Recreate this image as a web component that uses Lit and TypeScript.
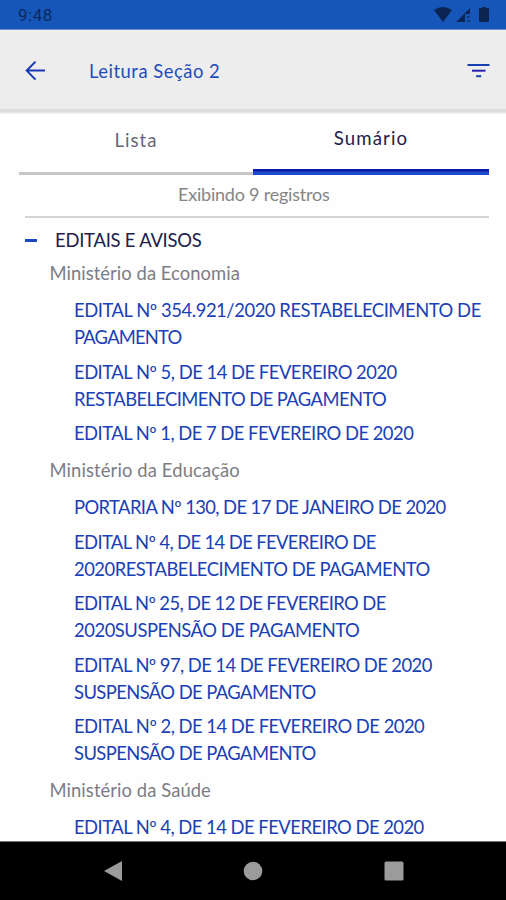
import { LitElement, html, css } from "lit";
import { customElement, property } from "lit/decorators.js";

type Line = [text: string, width: number];

const GROUPS: { name: Line; items: Line[][] }[] = [
  {
    name: ["Ministério da Economia", 188.5],
    items: [
      [["EDITAL Nº 354.921/2020 RESTABELECIMENTO DE", 405.5], ["PAGAMENTO", 106.5]],
      [["EDITAL Nº 5, DE 14 DE FEVEREIRO 2020", 321.5], ["RESTABELECIMENTO DE PAGAMENTO", 311]],
      [["EDITAL Nº 1, DE 7 DE FEVEREIRO DE 2020", 338]],
    ],
  },
  {
    name: ["Ministério da Educação", 188.5],
    items: [
      [["PORTARIA Nº 130, DE 17 DE JANEIRO DE 2020", 370.5]],
      [["EDITAL Nº 4, DE 14 DE FEVEREIRO DE", 300.5], ["2020RESTABELECIMENTO DE PAGAMENTO", 354.5]],
      [["EDITAL Nº 25, DE 12 DE FEVEREIRO DE", 310.5], ["2020SUSPENSÃO DE PAGAMENTO", 284]],
      [["EDITAL Nº 97, DE 14 DE FEVEREIRO DE 2020", 356.5], ["SUSPENSÃO DE PAGAMENTO", 240.5]],
      [["EDITAL Nº 2, DE 14 DE FEVEREIRO DE 2020", 349], ["SUSPENSÃO DE PAGAMENTO", 240.5]],
    ],
  },
  {
    name: ["Ministério da Saúde", 159.5],
    items: [[["EDITAL Nº 4, DE 14 DE FEVEREIRO DE 2020", 348.5]]],
  },
];

/** A single line of text whose tracking is adjusted to fill a given width. */
@customElement("tracked-line")
class TrackedLine extends LitElement {
  @property() text = "";
  @property({ type: Number }) width = 0;

  static styles = css`
    :host { display: block; white-space: nowrap; }
    .text { display: inline-block; }
  `;

  updated() {
    const el = this.renderRoot.querySelector<HTMLElement>(".text")!;
    const fit = () => {
      el.style.letterSpacing = "0px";
      const natural = el.getBoundingClientRect().width;
      // Side bearings add roughly 2px around the visible glyphs.
      el.style.letterSpacing = `${(this.width + 1.8 - natural) / (this.text.length - 1)}px`;
    };
    fit();
    document.fonts.ready.then(fit);
  }

  render() {
    return html`<span class="text">${this.text}</span>`;
  }
}

@customElement("app-root")
class AppRoot extends LitElement {
  static styles = css`
    :host {
      display: flex;
      flex-direction: column;
      height: 900px;
      width: 100%;
      overflow: hidden;
      background: #fefefe;
      font-family: Lato, "Open Sans", sans-serif;
      font-size: 18.4px;
      line-height: 27px;
      color: #1a40b6;
    }
    * { box-sizing: border-box; }
    svg { display: block; }
    .status {
      display: flex;
      flex: none;
      justify-content: space-between;
      height: 30px;
      padding: 2px 16px 0 18px;
      background: #1656b9;
      border-bottom: 1px solid #6f90cd;
      color: #0b2a60;
      font-family: Roboto, sans-serif;
      font-size: 17px;
    }
    .header {
      display: flex;
      flex: none;
      align-items: center;
      height: 79px;
      padding: 2px 16px 0 24px;
      background: #ededed;
    }
    .title { flex: 1; padding-left: 43px; padding-top: 1px; color: #1c4cba; }
    .shadow {
      flex: none;
      height: 5px;
      background: linear-gradient(#dcdcdc, #dedede 60%, #fafafa);
    }
    .main { flex: 1; min-height: 0; overflow: hidden; }
    .tabs { display: flex; height: 61px; padding: 0 17px 0 19px; }
    .tab { display: flex; justify-content: center; height: 61px; font-size: 18.6px; }
    .tab.plain {
      width: 234px;
      padding-top: 13px;
      border-bottom: 3px solid #c6c6c6;
      color: #66667a;
    }
    .tab.active {
      flex: 1;
      padding-top: 11px;
      color: #20204a;
      background: linear-gradient(#0a1aa6 0 2px, #1c4ac8 3px) bottom / 100% 6px no-repeat;
    }
    .count {
      display: flex;
      height: 43px;
      margin: 0 17px 0 25px;
      padding: 6px 0 0 153px;
      border-bottom: 2px solid #d4d4d4;
      color: #858585;
      font-size: 18px;
    }
    .section {
      display: flex;
      align-items: center;
      padding: 9px 0 0 25px;
      color: #20204a;
    }
    .minus { width: 12px; height: 3px; margin-right: 18px; background: #1b48c0; }
    .ministry { padding-left: 49.5px; margin-top: 10px; color: #7c7c84; font-size: 18.4px; }
    .section + .group .ministry { margin-top: 6px; }
    .items { display: flex; flex-direction: column; gap: 7.5px; padding: 10px 0 0 74px; }
    .nav {
      display: grid;
      flex: none;
      grid-template-columns: repeat(3, 140.5px);
      justify-content: center;
      justify-items: center;
      align-items: center;
      height: 59px;
      background: #000;
      border-top: 1px solid #777;
    }
  `;

  render() {
    return html`
      <div class="status">
        <tracked-line text="9:48" .width=${32.5}></tracked-line>
        <svg width="57" height="26" viewBox="0 0 57 26" fill="#0b2452">
          <path d="M1 8Q10 2 19 8L10 20Z" />
          <path d="M23 20L37 6V12H32V20Z" />
          <path d="M34 14h3v2h-3zM34 18h3v2h-3z" opacity=".6" />
          <path d="M47 6h2V5h4v1h2q1 0 1 1v12q0 1-1 1h-8q-1 0-1-1V7q0-1 1-1Z" />
        </svg>
      </div>
      <div class="header">
        <svg width="22" height="22" viewBox="0 0 22 22" fill="none" stroke="#1838b5" stroke-width="2">
          <path d="M21 10.6H3M11.5 1.6L2.7 10.6L11.5 19.6" />
        </svg>
        <tracked-line class="title" text="Leitura Seção 2" .width=${129}></tracked-line>
        <svg width="23" height="16" viewBox="0 0 23 16">
          <path d="M.5 1h22v2h-22z" fill="#173fb4" />
          <path d="M5 6.7h13.5v2H5z" fill="#2520b0" />
          <path d="M9.2 12.2h5v2h-5z" fill="#173fb4" />
        </svg>
      </div>
      <div class="shadow"></div>
      <div class="main">
        <div class="tabs">
          <div class="tab plain"><tracked-line text="Lista" .width=${40}></tracked-line></div>
          <div class="tab active"><tracked-line text="Sumário" .width=${71.5}></tracked-line></div>
        </div>
        <div class="count"><tracked-line text="Exibindo 9 registros" .width=${150}></tracked-line></div>
        <div class="section">
          <span class="minus"></span>
          <tracked-line text="EDITAIS E AVISOS" .width=${145}></tracked-line>
        </div>
        ${GROUPS.map(
          (g) => html`<div class="group">
            <tracked-line class="ministry" .text=${g.name[0]} .width=${g.name[1]}></tracked-line>
            <div class="items">
              ${g.items.map(
                (lines) => html`<div class="item">
                  ${lines.map(([t, w]) => html`<tracked-line .text=${t} .width=${w}></tracked-line>`)}
                </div>`
              )}
            </div>
          </div>`
        )}
      </div>
      <div class="nav">
        <svg width="20" height="22" viewBox="0 0 20 22"><path d="M1 11L19 1V21Z" fill="#9b9b9b" /></svg>
        <svg width="20" height="20" viewBox="0 0 20 20"><circle cx="10" cy="10" r="9.3" fill="#9b9b9b" /></svg>
        <svg width="20" height="20" viewBox="0 0 20 20"><rect x=".5" y=".5" width="19" height="19" rx="1.5" fill="#9b9b9b" /></svg>
      </div>
    `;
  }
}
